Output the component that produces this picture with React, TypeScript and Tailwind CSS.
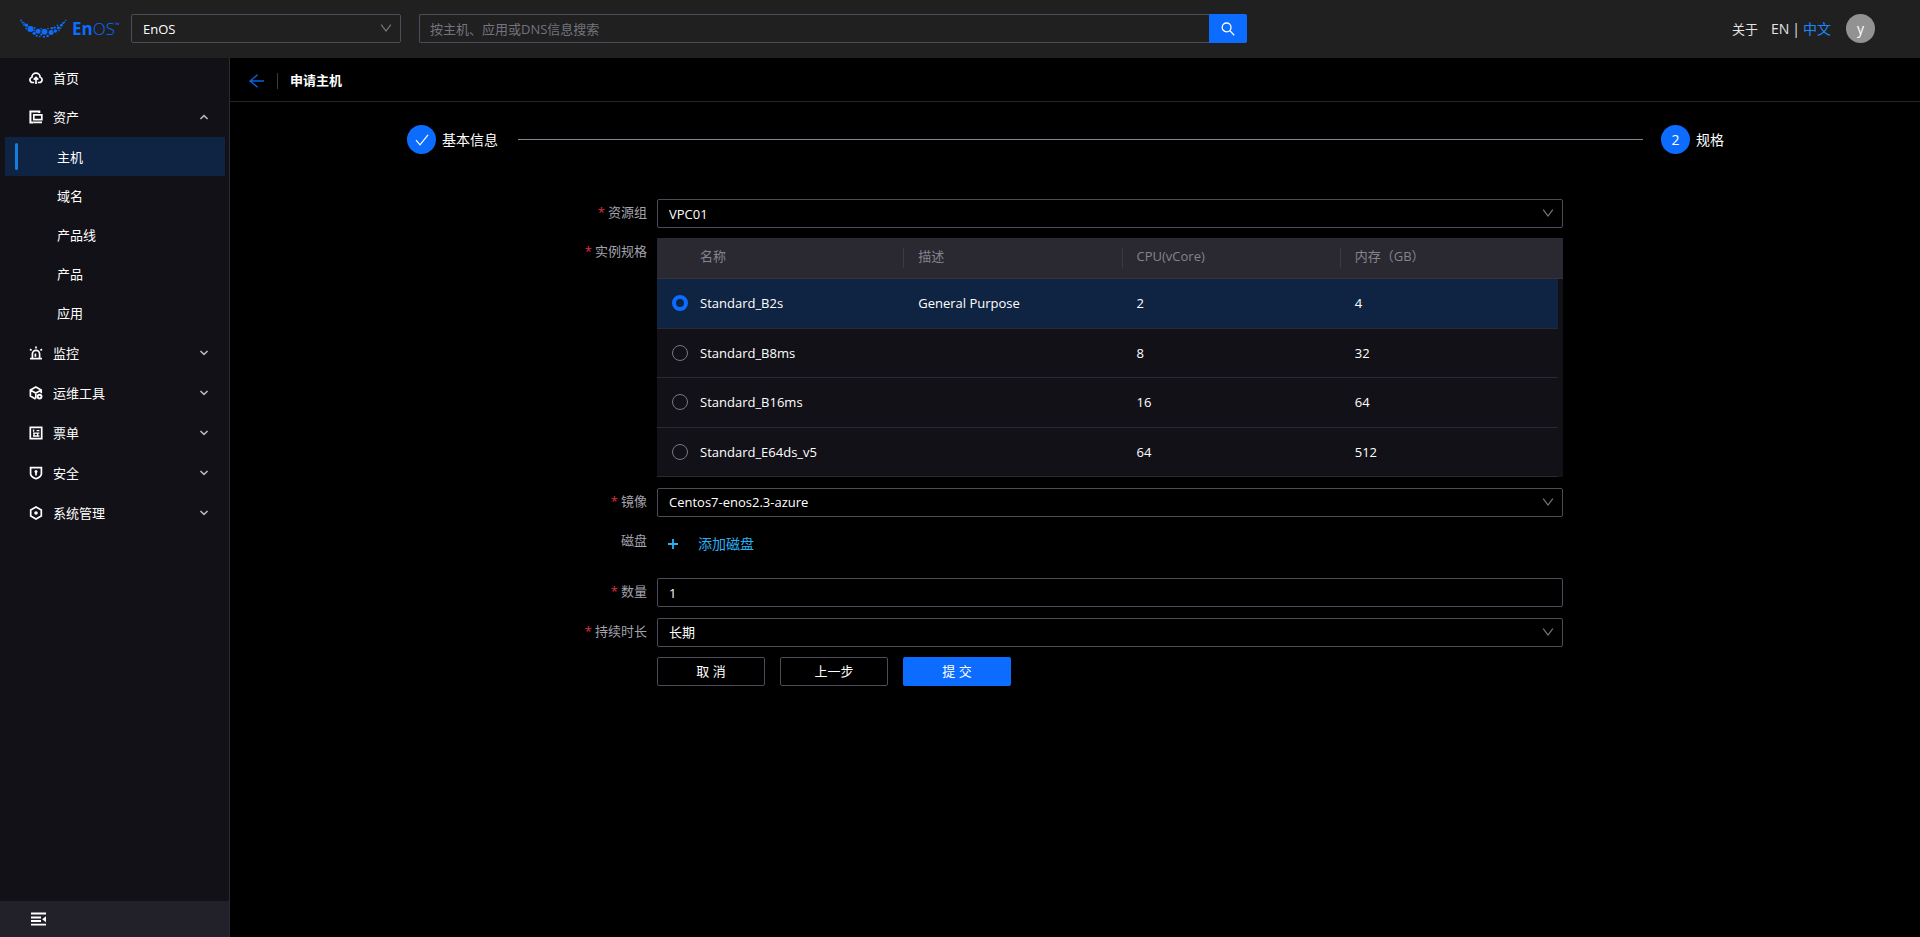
import React, { useState } from "react";

type IconProps = { className?: string };

function MenuIcon({ children }: { children: React.ReactNode }) {
  return (
    <svg
      viewBox="0 0 14 14"
      className="size-3.5 shrink-0"
      fill="none"
      stroke="currentColor"
      strokeWidth="1.7"
      aria-hidden="true"
    >
      {children}
    </svg>
  );
}

const HomeIcon = () => (
  <MenuIcon>
    <path d="M5.2 11.5H3.6A2.7 2.7 0 0 1 2.9 6.2a4.1 4.1 0 0 1 8.2 0 2.7 2.7 0 0 1-.7 5.3H8.8" />
    <path d="M7 13V6.6M4.7 8.7 7 6.4l2.3 2.3" />
  </MenuIcon>
);

const AssetIcon = () => (
  <MenuIcon>
    <path d="M10.3 3V1.5H1.4v11h2.8" strokeWidth="2" />
    <path d="M4.8 4.8h8v4.8h-8zM4.2 12.3h8.8" />
  </MenuIcon>
);

const MonitorIcon = () => (
  <MenuIcon>
    <path d="M1 12.6h12M3.4 12.4V8a3.6 3.6 0 0 1 7.2 0v4.4M7 .6v2M1 3.2l1.6 1.2M13 3.2l-1.6 1.2" />
    <path d="M6.4 7.6v3.2" />
  </MenuIcon>
);

const ToolsIcon = () => (
  <MenuIcon>
    <path d="M6.6 12.9 1.4 10V4L6.8 1l5.4 3v3.2M1.6 4.2 6.8 7l5.2-2.8M6.8 7v5.6" />
    <circle cx="10.6" cy="10.6" r="1.9" strokeWidth="1.9" />
  </MenuIcon>
);

const TicketIcon = () => (
  <MenuIcon>
    <path d="M1.3 1.3h11.4v11.4H1.3z" />
    <path d="M4.6 3.4v2.4M7.6 4.6h2.8" strokeWidth="1.4" />
    <path d="M4 7.2h6.4M4 10h6.4M5 6.6v3.8M8.6 6.6v3.8" strokeWidth="1.3" />
  </MenuIcon>
);

const ShieldIcon = () => (
  <MenuIcon>
    <path d="M1.6 1.6h10.8v6.2c0 2.4-2.6 4-5.4 5-2.8-1-5.4-2.6-5.4-5z" />
    <circle cx="7" cy="5.4" r="1.5" fill="currentColor" stroke="none" />
    <path d="M7 6v3.4" />
  </MenuIcon>
);

const SystemIcon = () => (
  <MenuIcon>
    <path d="M7 1 12.3 4v6L7 13 1.7 10V4z" />
    <circle cx="7" cy="7" r="1.8" fill="currentColor" stroke="none" />
  </MenuIcon>
);

function Chevron({ className }: IconProps) {
  return (
    <svg viewBox="0 0 10 6" className={className} fill="none" stroke="currentColor" strokeWidth="1.6" aria-hidden="true">
      <path d="m1.4 1 3.6 3.4L8.6 1" />
    </svg>
  );
}

function SelectArrow({ className }: IconProps) {
  return (
    <svg viewBox="0 0 12 12" className={className} fill="none" stroke="currentColor" strokeWidth="1.2" aria-hidden="true">
      <path d="M1.2 2.6 6 9l4.8-6.4" />
    </svg>
  );
}

const logoDots: [number, number, number][] = [
  [1, 1.4, 0.9], [2.6, 3.4, 1], [4.2, 4.2, 0.8], [4, 6, 0.9], [6.4, 6.3, 1.7], [6.4, 9.6, 1], [8.4, 8.2, 0.8],
  [10.6, 10, 2.9], [8.2, 11.6, 0.8], [14.6, 9, 0.9], [14.2, 11.6, 0.9], [14.2, 14.3, 1.6], [18.1, 12.3, 2.5],
  [16.8, 16.8, 1.1], [21.2, 9.8, 0.8], [21.2, 15.6, 1.1], [24.5, 12.7, 2.9], [24, 17.8, 1.1], [19.8, 17.6, 0.8],
  [27.6, 17, 1.3], [28, 9.6, 0.8], [31.1, 13.4, 2.5], [31.8, 9.2, 1.2], [34.6, 8.6, 1.2], [35.4, 12, 1.7],
  [38.4, 8.8, 1.6], [37.4, 6.4, 0.8], [39, 11.6, 0.8], [41.4, 6.2, 1.4], [40.8, 9, 0.8], [43.2, 4, 1.1],
  [44.6, 3.2, 0.8], [45.8, 1.2, 0.8],
];

function Logo() {
  return (
    <a href="#home" aria-label="EnOS" className="flex w-[111px] shrink-0 items-center gap-[5px] text-[#0b6cff]">
      <svg viewBox="0 0 47 20" className="h-5 w-[47px] shrink-0" fill="currentColor" aria-hidden="true">
        {logoDots.map(([x, y, r]) => (
          <circle key={`${x}-${y}`} cx={x} cy={y} r={r} />
        ))}
      </svg>
      <span className="flex text-[17px] leading-5">
        <span className="font-bold">En</span>
        <span className="font-light">OS</span>
        <span className="text-[6px] leading-3">™</span>
      </span>
    </a>
  );
}

type SelectFieldProps = { id: string; value: string; label?: string };

function SelectField({ id, value, label }: SelectFieldProps) {
  return (
    <div className="relative w-full">
      <select
        id={id}
        aria-label={label}
        defaultValue={value}
        className="block h-[29px] w-full appearance-none rounded-xs border border-[#4c4b57] bg-transparent px-[11px] text-[13px] text-white outline-none focus:border-[#0b6cff]"
      >
        <option className="bg-[#121117]">{value}</option>
      </select>
      <SelectArrow className="pointer-events-none absolute top-2 right-[9px] size-3 text-[#777683]" />
    </div>
  );
}

type RowProps = { id?: string; label: string; required?: boolean; children: React.ReactNode };

function FormRow({ id, label, required, children }: RowProps) {
  return (
    <div className="flex items-start gap-[10px]">
      <label htmlFor={id} className="w-[150px] shrink-0 text-right leading-[26px] text-[#a3a2ad]">
        {required && <span className="mr-[3px] text-[#e02f44]">*</span>}
        {label}
      </label>
      <div className="min-w-0 flex-1">{children}</div>
    </div>
  );
}

const assetChildren = ["主机", "域名", "产品线", "产品", "应用"];

const groups = [
  { label: "监控", icon: <MonitorIcon /> },
  { label: "运维工具", icon: <ToolsIcon /> },
  { label: "票单", icon: <TicketIcon /> },
  { label: "安全", icon: <ShieldIcon /> },
  { label: "系统管理", icon: <SystemIcon /> },
];

const specs = [
  { name: "Standard_B2s", desc: "General Purpose", cpu: "2", memory: "4" },
  { name: "Standard_B8ms", desc: "", cpu: "8", memory: "32" },
  { name: "Standard_B16ms", desc: "", cpu: "16", memory: "64" },
  { name: "Standard_E64ds_v5", desc: "", cpu: "64", memory: "512" },
];

const columns = ["名称", "描述", "CPU(vCore)", "内存（GB）"];

function Header() {
  return (
    <header className="flex h-[58px] shrink-0 items-center bg-[#202020] pr-[45px] pb-px pl-5">
      <Logo />
      <div className="w-[270px] shrink-0">
        <SelectField id="org" value="EnOS" label="组织" />
      </div>
      <form className="ml-[18px] flex w-[828px]" onSubmit={(e) => e.preventDefault()}>
        <input
          type="text"
          aria-label="搜索"
          placeholder="按主机、应用或DNS信息搜索"
          className="h-[29px] min-w-0 flex-1 rounded-l-xs border border-r-0 border-[#4c4b57] bg-transparent px-[10px] text-[13px] text-white outline-none placeholder:text-[#74737f]"
        />
        <button
          type="submit"
          aria-label="搜索"
          className="flex h-[29px] w-[38px] items-center justify-center rounded-r-xs bg-[#0b6cff] text-white"
        >
          <svg viewBox="0 0 14 14" className="size-3.5" fill="none" stroke="currentColor" strokeWidth="1.3" aria-hidden="true">
            <circle cx="5.6" cy="5.4" r="4.4" />
            <path d="m8.8 8.6 4.4 4.6" />
          </svg>
        </button>
      </form>
      <div className="ml-auto flex items-center text-[13px] text-[#e4e4e6]">
        <a href="#about">关于</a>
        <div className="ml-[13px] flex items-center gap-[3px] text-sm">
          <a href="#en">EN</a>
          <span>|</span>
          <a href="#zh" className="text-[#1a86ff]">中文</a>
        </div>
        <button type="button" className="ml-[15px] size-[29px] rounded-full bg-[#929292] text-sm text-white">
          y
        </button>
      </div>
    </header>
  );
}

function Sidebar() {
  return (
    <aside className="flex w-[230px] shrink-0 flex-col border-r border-[#2c2b33] bg-[#121117] text-white">
      <nav className="flex-1">
        <a href="#overview" className="flex h-[39px] items-center gap-[10px] pl-[29px]">
          <HomeIcon />
          首页
        </a>
        <button type="button" className="flex h-10 w-full items-center gap-[10px] pr-5 pl-[29px]">
          <AssetIcon />
          资产
          <Chevron className="ml-auto h-[6px] w-[10px] rotate-180 text-[#b4b4ba]" />
        </button>
        <ul className="pb-px">
          {assetChildren.map((item, index) => (
            <li key={item} className="pr-1 pl-[5px]">
              <a
                href="#assets"
                className={
                  index === 0
                    ? "flex h-[39px] items-center bg-[#0f2442] pl-[10px]"
                    : "flex h-[39px] items-center pl-[10px]"
                }
              >
                <span
                  className={
                    index === 0 ? "mr-[39px] h-[27px] w-[3px] rounded-xs bg-[#177ddc]" : "mr-[39px] w-[3px]"
                  }
                />
                {item}
              </a>
            </li>
          ))}
        </ul>
        {groups.map((group) => (
          <button key={group.label} type="button" className="flex h-10 w-full items-center gap-[10px] pr-5 pl-[29px]">
            {group.icon}
            {group.label}
            <Chevron className="ml-auto h-[6px] w-[10px] text-[#b4b4ba]" />
          </button>
        ))}
      </nav>
      <button type="button" aria-label="收起菜单" className="flex h-9 items-center bg-[#22212a] pl-[31px] text-white">
        <svg viewBox="0 0 15 14" className="h-3.5 w-[15px]" aria-hidden="true">
          <path d="M0 1.5h15M0 5.5h10M0 9h10M0 12.7h15" stroke="currentColor" strokeWidth="1.8" />
          <path d="M15 4.2v6L11.2 7.2z" fill="currentColor" />
        </svg>
      </button>
    </aside>
  );
}

function Steps() {
  return (
    <ol className="flex items-center pt-[23px] pr-[196px] pl-[177px] text-sm text-white">
      <li className="flex items-center gap-[6px]">
        <span className="flex size-[29px] items-center justify-center rounded-full bg-[#0b6cff]">
          <svg viewBox="0 0 14 12" className="h-3 w-3.5" fill="none" stroke="currentColor" strokeWidth="1.2" aria-hidden="true">
            <path d="m1 6.2 4 4.6L13 .8" />
          </svg>
        </span>
        基本信息
      </li>
      <li aria-hidden="true" className="mr-[18px] ml-5 h-px flex-1 bg-[#868594]" />
      <li className="flex items-center gap-[6px]">
        <span className="flex size-[29px] items-center justify-center rounded-full bg-[#0b6cff]">2</span>
        规格
      </li>
    </ol>
  );
}

function SpecTable() {
  const [selected, setSelected] = useState(0);
  return (
    <table className="w-full table-fixed bg-[#121117] text-left text-white">
      <colgroup>
        <col className="w-[28px]" />
        <col />
        <col />
        <col />
        <col />
        <col className="w-[5px]" />
      </colgroup>
      <thead>
        <tr className="h-10 border-b border-[#35343d] bg-[#2a2830] text-[#84838f]">
          <td />
          {columns.map((column, index) => (
            <th key={column} className="p-0 font-normal">
              <div
                className={
                  index === 0 ? "h-5 pl-[15px] leading-4" : "h-5 border-l border-[#3b3a44] pl-[14px] leading-4"
                }
              >
                {column}
              </div>
            </th>
          ))}
          <td />
        </tr>
      </thead>
      <tbody>
        {specs.map((spec, index) => (
          <tr key={spec.name} className="odd:h-[50px] even:h-[49px]">
            {[
              <input
                key="radio"
                type="radio"
                name="spec"
                aria-label={spec.name}
                checked={selected === index}
                onChange={() => setSelected(index)}
                className="block size-4 appearance-none rounded-full border border-[#777683] checked:border-4 checked:border-[#0b6cff]"
              />,
              spec.name,
              spec.desc,
              spec.cpu,
              spec.memory,
            ].map((cell, i) => (
              <td
                key={i}
                className={
                  selected === index
                    ? "overflow-visible border-b border-[#2b2a33] bg-linear-to-r from-[#0f2442] to-[#0f2442] pl-[15px] first:relative first:z-10"
                    : "border-b border-[#2b2a33] pl-[15px]"
                }
              >
                {cell}
              </td>
            ))}
            <td />
          </tr>
        ))}
      </tbody>
    </table>
  );
}

function SpecForm() {
  return (
    <form
      className="flex flex-col gap-[10px] pt-[45px] pr-[357px] pl-[267px]"
      onSubmit={(e) => e.preventDefault()}
    >
      <FormRow id="group" label="资源组" required>
        <SelectField id="group" value="VPC01" />
      </FormRow>
      <FormRow label="实例规格" required>
        <SpecTable />
      </FormRow>
      <div className="flex flex-col gap-[10px] pt-px">
        <FormRow id="image" label="镜像" required>
          <SelectField id="image" value="Centos7-enos2.3-azure" />
        </FormRow>
        <FormRow id="disk" label="磁盘">
          <div className="h-[41px]">
            <button id="disk" type="button" className="flex h-[34px] items-center gap-5 pl-[11px] text-sm text-[#2bb1f3]">
              <svg viewBox="0 0 10 10" className="size-[10px]" stroke="currentColor" strokeWidth="1.8" aria-hidden="true">
                <path d="M5 0v10M0 5h10" />
              </svg>
              添加磁盘
            </button>
          </div>
        </FormRow>
        <FormRow id="count" label="数量" required>
          <input
            id="count"
            type="text"
            defaultValue="1"
            className="block h-[29px] w-full rounded-xs border border-[#4c4b57] bg-transparent px-[11px] pt-px text-white outline-none focus:border-[#0b6cff]"
          />
        </FormRow>
        <div className="flex flex-col gap-[10px] pt-px">
          <FormRow id="duration" label="持续时长" required>
            <SelectField id="duration" value="长期" />
          </FormRow>
          <div className="flex gap-[15px] pl-[160px] text-white">
            <button type="button" className="h-[29px] w-[108px] rounded-xs border border-[#4c4b57]">取 消</button>
            <button type="button" className="h-[29px] w-[108px] rounded-xs border border-[#4c4b57]">上一步</button>
            <button type="submit" className="h-[29px] w-[108px] rounded-xs bg-[#0b6cff]">提 交</button>
          </div>
        </div>
      </div>
    </form>
  );
}

export default function App() {
  return (
    <div className="flex min-h-screen flex-col bg-black font-['Open_Sans','Noto_Sans_CJK_SC',sans-serif] text-[13px] leading-5">
      <Header />
      <div className="flex flex-1">
        <Sidebar />
        <main className="min-w-0 flex-1">
          <div className="flex h-11 items-center border-b border-[#262626] pt-[3px] pl-[19px]">
            <a href="#assets" aria-label="返回" className="text-[#0b62e0]">
              <svg viewBox="0 0 15 14" className="h-3.5 w-[15px]" fill="none" stroke="currentColor" strokeWidth="1.4" aria-hidden="true">
                <path d="M15 7H1M8.6.8 1 7l7.6 6.2" />
              </svg>
            </a>
            <span className="ml-[13px] h-4 w-px bg-[#3b3a44]" />
            <h1 className="ml-3 pb-[2px] font-bold text-white">申请主机</h1>
          </div>
          <Steps />
          <SpecForm />
        </main>
      </div>
    </div>
  );
}
